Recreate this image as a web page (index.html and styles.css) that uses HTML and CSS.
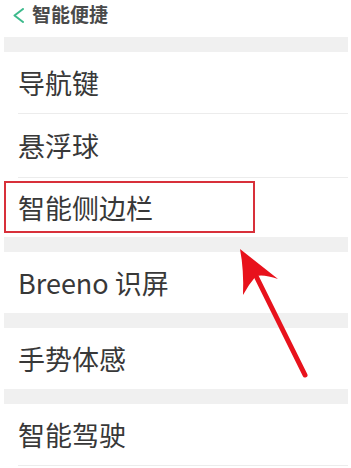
FILE: index.html
```html
<!DOCTYPE html>
<html lang="zh-CN">
<head>
<meta charset="utf-8">
<link rel="stylesheet" href="styles.css">
</head>
<body>
<div class="page">
  <header class="header">
    <svg class="back" width="13" height="15" viewBox="0 0 13 15"><polyline points="11,1 2.5,7.5 11,14" fill="none" stroke="#3dba8c" stroke-width="2" stroke-linecap="round" stroke-linejoin="round"/></svg>
    <span class="title">智能便捷</span>
  </header>
  <div class="band"></div>
  <div class="row">导航键</div>
  <div class="divider"></div>
  <div class="row tall">悬浮球</div>
  <div class="divider"></div>
  <div class="row short">智能侧边栏</div>
  <div class="band"></div>
  <div class="row">Breeno 识屏</div>
  <div class="band"></div>
  <div class="row">手势体感</div>
  <div class="band"></div>
  <div class="row">智能驾驶</div>
  <div class="divider"></div>

  <div class="highlight"></div>
  <svg class="arrow" width="351" height="468" viewBox="0 0 351 468">
    <line x1="305" y1="375" x2="256" y2="276" stroke="#e8121c" stroke-width="5" stroke-linecap="round"/>
    <path d="M240 249 L278 279 Q264 274 256 276 Q249 284 243 295 Q244 270 240 249 Z" fill="#e8121c"/>
  </svg>
</div>
</body>
</html>
```

FILE: styles.css
```css
html, body {
  margin: 0;
  padding: 0;
  background: #ffffff;
}
.page {
  position: relative;
  width: 351px;
  height: 468px;
  overflow: hidden;
  font-family: "Noto Sans CJK SC", "Noto Sans", sans-serif;
  color: #383838;
}
.header {
  height: 37px;
  display: flex;
  align-items: flex-start;
  padding: 3px 0 0 12px;
  box-sizing: border-box;
  gap: 7px;
}
.back {
  margin-top: 5px;
}
.title {
  font-size: 19px;
  line-height: 22px;
  font-weight: 700;
  color: #4a4a4a;
}
.band {
  height: 15px;
  margin: 0 3px 0 4px;
  background: #f0f0f0;
}
.row {
  height: 61px;
  display: flex;
  align-items: center;
  padding-left: 18px;
  font-size: 27px;
  line-height: 1;
}
.row.tall {
  height: 63px;
}
.row.short {
  height: 59px;
}
.divider {
  height: 1px;
  margin: 0 3px 0 18px;
  background: #ececec;
}
.highlight {
  position: absolute;
  left: 4px;
  top: 181px;
  width: 247px;
  height: 48px;
  border: 2px solid #d8303a;
}
.arrow {
  position: absolute;
  left: 0;
  top: 0;
}
```
